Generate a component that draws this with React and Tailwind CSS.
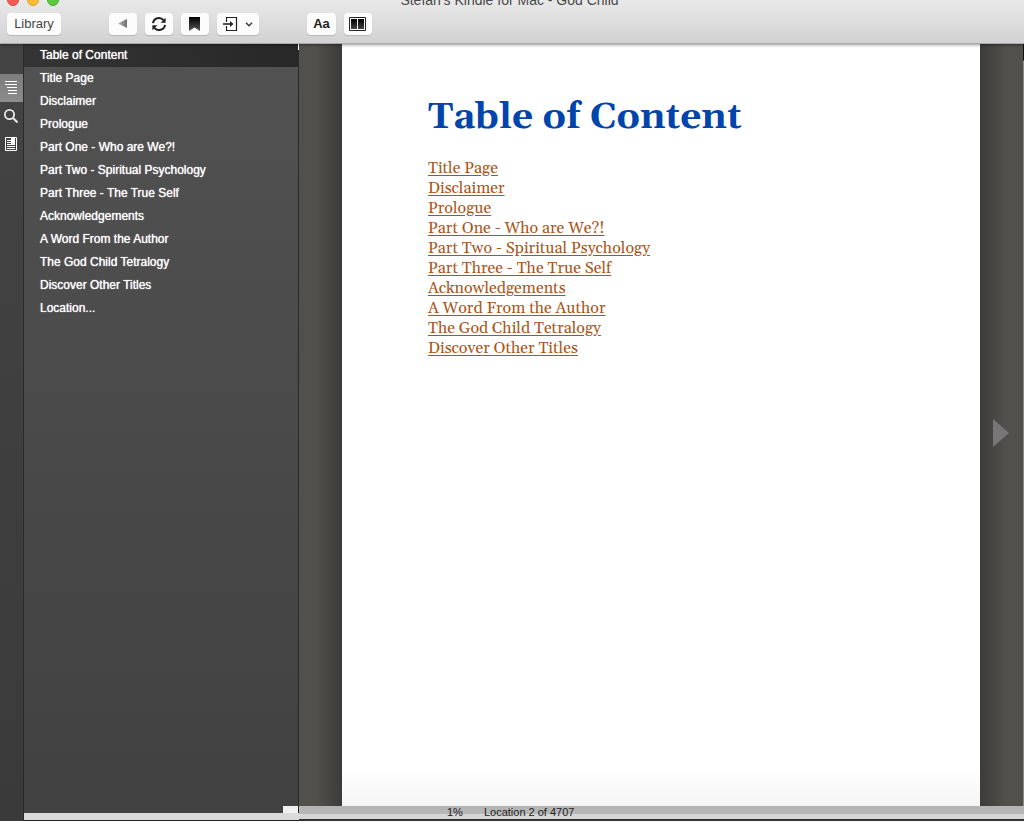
import React from 'react';

const CHAPTERS = [
  'Title Page',
  'Disclaimer',
  'Prologue',
  'Part One - Who are We?!',
  'Part Two - Spiritual Psychology',
  'Part Three - The True Self',
  'Acknowledgements',
  'A Word From the Author',
  'The God Child Tetralogy',
  'Discover Other Titles',
];

const SIDEBAR_ITEMS = ['Table of Content', ...CHAPTERS, 'Location...'];

const BUTTON =
  'flex h-[22px] items-center justify-center rounded bg-[#fcfcfc] shadow-[0_1px_1px_rgba(0,0,0,0.15)]';

const BackIcon = () => (
  <svg width="10" height="10" viewBox="0 0 10 10">
    <defs>
      <linearGradient id="back" x1="0" x2="1">
        <stop offset="0" stopColor="#b4b4b4" />
        <stop offset="1" stopColor="#6f6f6f" />
      </linearGradient>
    </defs>
    <path d="M0 4.5 9 0v9z" fill="url(#back)" />
  </svg>
);

const SyncIcon = () => (
  <svg width="16" height="16" viewBox="0 0 16 16" fill="none" stroke="#222" strokeWidth="2">
    <path d="M2 7.2A6 6 0 0 1 12.6 4.2" />
    <path d="M14 8.8A6 6 0 0 1 3.4 11.8" />
    <path d="M14.6 1.8v5h-5z" fill="#222" stroke="none" />
    <path d="M1.4 14.2v-5h5z" fill="#222" stroke="none" />
  </svg>
);

const BookmarkIcon = () => (
  <svg width="12" height="14" viewBox="0 0 12 14">
    <defs>
      <linearGradient id="mark" x1="0" y1="0" x2="0" y2="1">
        <stop offset="0" stopColor="#000" />
        <stop offset="1" stopColor="#555" />
      </linearGradient>
    </defs>
    <path d="M0 0h11v14L5.5 10.5 0 14z" fill="url(#mark)" />
  </svg>
);

const GoToIcon = () => (
  <svg width="15" height="14" viewBox="0 0 15 14" fill="none" stroke="#222">
    <path d="M3.5 5V.5h10v13h-10V9" strokeWidth="1.2" />
    <path d="M0 7h8" strokeWidth="1.6" />
    <path d="M7 4l3.5 3L7 10z" fill="#222" stroke="none" />
  </svg>
);

const ColumnsIcon = () => (
  <svg width="18" height="14" viewBox="0 0 18 14">
    <defs>
      <linearGradient id="cols" x1="0" y1="0" x2="0" y2="1">
        <stop offset="0" stopColor="#000" />
        <stop offset="1" stopColor="#444" />
      </linearGradient>
    </defs>
    <path d="M.5.5h16v13H.5z" fill="#fff" stroke="#222" />
    <path d="M2 2h6v10H2zM9 2h6v10H9z" fill="url(#cols)" />
  </svg>
);

const ListIcon = () => (
  <svg width="12" height="14" viewBox="0 0 12 14" stroke="#fff">
    <path d="M0 .5h12M0 3.5h12M2 6.5h10M3 9.5h9M3 12.5h9" />
  </svg>
);

const SearchIcon = () => (
  <svg width="14" height="14" viewBox="0 0 14 14" fill="none" stroke="#e8e8e8">
    <circle cx="5.5" cy="5.5" r="4.6" strokeWidth="1.8" />
    <path d="M9 9l4.5 4.5" strokeWidth="2" />
  </svg>
);

const NotesIcon = () => (
  <svg width="12" height="14" viewBox="0 0 12 14" fill="none" stroke="#fff">
    <path d="M.5.5h11v13H.5z" />
    <path d="M2 3.5h4M2 5.5h4M2 7.5h8M2 9.5h8M2 11.5h8" />
    <path d="M6 0h4v8L8 6.5 6 8z" fill="#fff" stroke="none" />
  </svg>
);

const Header = () => (
  <header className="relative z-10 h-11 shrink-0 border-b border-[#aaa] bg-gradient-to-b from-[#e9e9e9] to-[#d2d2d2] shadow-[0_1px_3px_rgba(0,0,0,0.4)]">
    {/* Title bar, partly above the top edge of the window */}
    <div className="-mt-[11px] grid h-[22px] grid-cols-[1fr_auto_1fr] items-center pr-3 pl-[7px]">
      <div className="flex gap-2">
        <button aria-label="Close" className="size-3 rounded-full border border-[#dc4a42] bg-[#f45b55]" />
        <button aria-label="Minimize" className="size-3 rounded-full border border-[#dea02c] bg-[#fcbc34]" />
        <button aria-label="Zoom" className="size-3 rounded-full border border-[#4aad2f] bg-[#5ec840]" />
      </div>
      <h1 className="text-[14px] leading-[22px] text-[#4a4a4a]">Stefan's Kindle for Mac - God Child</h1>
    </div>
    <div className="flex px-[7px] pt-0.5">
      <button className={`${BUTTON} w-[54px] text-[13px] text-[#444]`}>Library</button>
      <div className="ml-12 flex gap-2">
        <button aria-label="Back" className={`${BUTTON} w-7`}><BackIcon /></button>
        <button aria-label="Sync" className={`${BUTTON} w-7`}><SyncIcon /></button>
        <button aria-label="Bookmark" className={`${BUTTON} w-7`}><BookmarkIcon /></button>
        <button aria-label="Go to" className={`${BUTTON} w-[42px] gap-[7px]`}>
          <GoToIcon />
          <svg width="8" height="5" viewBox="0 0 8 5" fill="none" stroke="#333" strokeWidth="1.3">
            <path d="M1 .8l3 3 3-3" />
          </svg>
        </button>
      </div>
      <div className="ml-12 flex gap-2">
        <button className={`${BUTTON} w-[29px] text-[13px] font-bold text-[#222]`}>Aa</button>
        <button aria-label="Columns" className={`${BUTTON} w-7`}><ColumnsIcon /></button>
      </div>
    </div>
  </header>
);

const Rail = () => (
  <nav className="flex w-6 shrink-0 flex-col border-r border-[#2a2a2a] bg-gradient-to-b from-[#444] to-[#3a3a3a] pt-[30px]">
    <button aria-label="Contents" className="flex h-7 items-center bg-gradient-to-b from-[#7c7c7c] to-[#8c8c8c] pl-[5px]"><ListIcon /></button>
    <button aria-label="Search" className="flex h-7 items-center pl-1"><SearchIcon /></button>
    <button aria-label="Notes" className="flex h-7 items-center pl-[5px]"><NotesIcon /></button>
  </nav>
);

const Sidebar = () => (
  <aside className="relative flex w-[275px] shrink-0 flex-col">
    <div className="absolute top-0 right-0 h-1.5 w-px bg-white" />
    <ul className="flex-1 border-r border-[#2a2a2a] bg-gradient-to-b from-[#525252] to-[#414141]">
      {SIDEBAR_ITEMS.map((item, index) => (
        <li key={item} className={index === 0 ? 'bg-gradient-to-r from-[#343434] to-[#282828]' : ''}>
          <a href="#" className="block pl-4 text-[12px] leading-[23px] text-white [text-shadow:0_0_1px_#fff]">{item}</a>
        </li>
      ))}
    </ul>
    <div className="relative h-[7px] shrink-0 bg-[#dadada]">
      <div className="absolute right-px bottom-full h-[7px] w-[15px] bg-[#f0f0f0]" />
    </div>
    <div className="h-px shrink-0 bg-[#222]" />
  </aside>
);

const Reader = () => (
  <main className="flex min-w-0 flex-1 flex-col">
    <div className="flex min-h-0 flex-1">
      <div className="w-[43px] shrink-0 bg-gradient-to-r from-[#51504d] from-40% to-[#3c3b39]" />
      <article className="min-w-0 flex-1 bg-gradient-to-b from-white from-95% to-[#f5f5f5] px-[86px] pt-[51px] font-[Georgia,Gelasio,'Liberation_Serif',serif]">
        <h2 className="text-[37px] leading-[45px] font-bold whitespace-nowrap text-[#0045ab]">Table of Content</h2>
        <ul className="mt-[18px]">
          {CHAPTERS.map((chapter) => (
            <li key={chapter} className="text-[16px] leading-5">
              <a href="#" className="text-[#a9561a] underline underline-offset-2">{chapter}</a>
            </li>
          ))}
        </ul>
      </article>
      <div className="flex w-[43px] shrink-0 items-center bg-gradient-to-r from-[#3c3b39] to-[#51504d] to-60% pt-4 pl-[13px]">
        <button aria-label="Next page">
          <svg width="16" height="28" viewBox="0 0 16 28"><path d="M0 0l16 14L0 28z" fill="#777575" /></svg>
        </button>
      </div>
      <div className="w-px shrink-0 bg-linear-[to_bottom,#111_16px,#8a8a88_17px]" />
    </div>
    <footer className="shrink-0 border-b-2 border-[#333]">
      <div className="flex gap-[21px] bg-linear-[to_bottom,#b5b5b5_8px,#d6d6d6_8px] pl-[148px] text-[11px] leading-[13px] text-[#222]">
        <span>1%</span>
        <span>Location 2 of 4707</span>
      </div>
    </footer>
  </main>
);

const App = () => (
  <div className="flex h-screen flex-col overflow-hidden bg-white pb-[11px] font-['Liberation_Sans',sans-serif]">
    <Header />
    <div className="flex min-h-0 flex-1">
      <Rail />
      <Sidebar />
      <Reader />
    </div>
  </div>
);

export default App;
